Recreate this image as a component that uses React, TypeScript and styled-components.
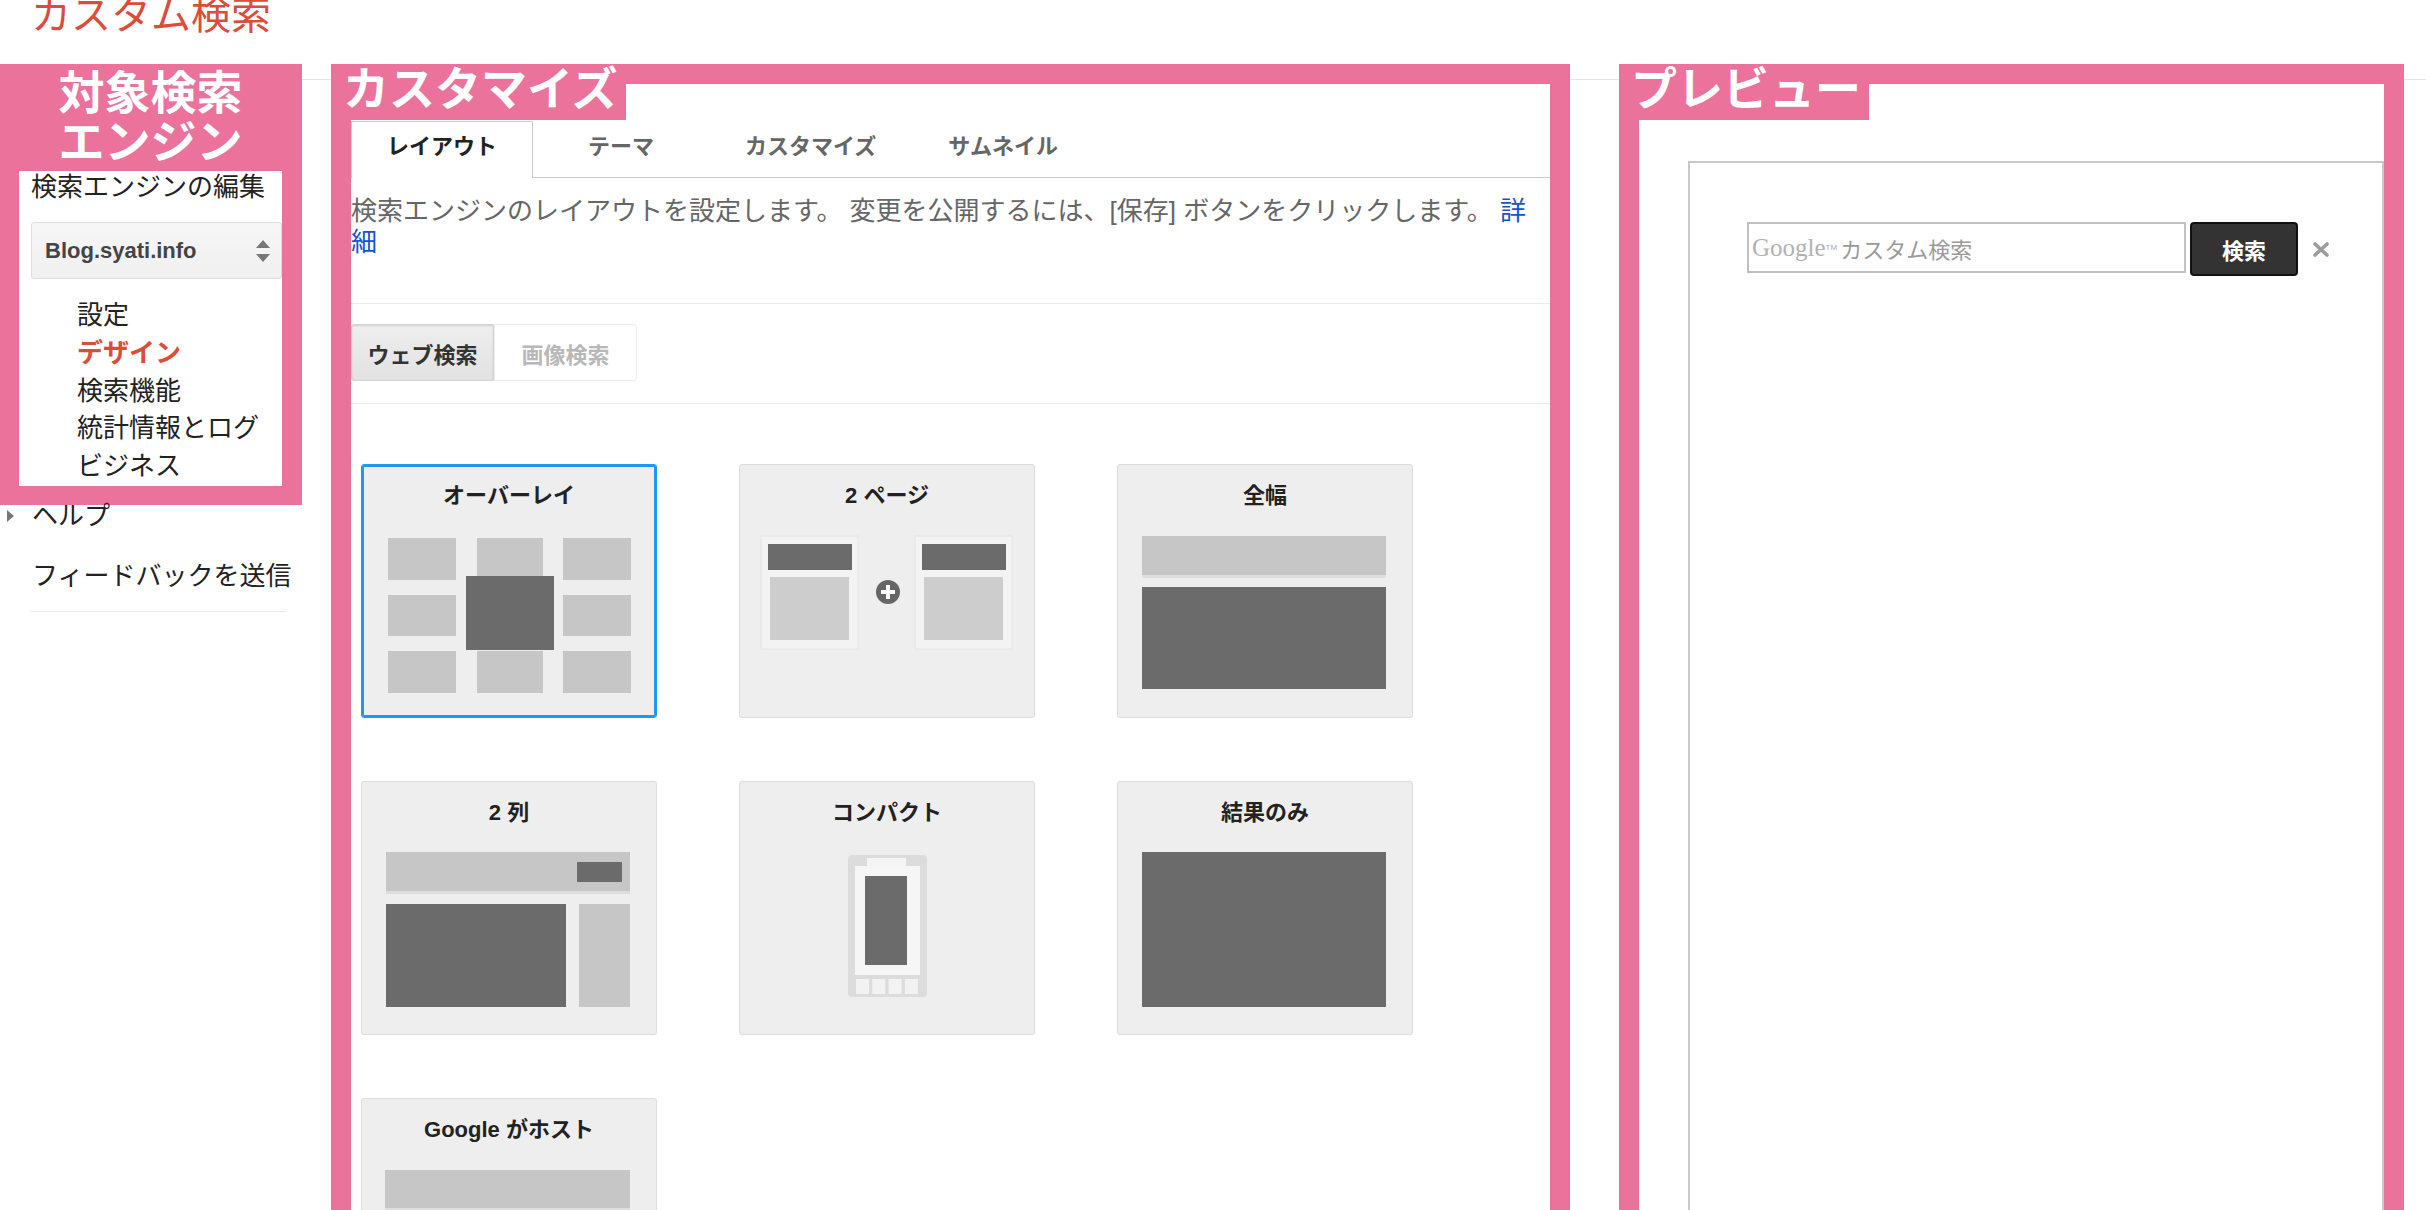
import React from "react";
import styled, { createGlobalStyle } from "styled-components";

const PINK = "#eb739b";
const DARK = "#6b6b6b";
const LIGHT = "#c6c6c6";

const GlobalStyle = createGlobalStyle`
  html, body {
    margin: 0;
    padding: 0;
    background: #fff;
    overflow: hidden;
  }
  body {
    font-family: "Liberation Sans", "Noto Sans CJK JP", sans-serif;
    color: #222;
  }
`;

const Page = styled.div`
  width: 2426px;
  height: 1210px;
  overflow: hidden;
`;

const Header = styled.header`
  display: flow-root;
  height: 79px;
  border-bottom: 1px solid #e5e5e5;
`;

const Title = styled.h1`
  margin: -5px 0 0;
  padding-left: 31px;
  font-size: 40px;
  line-height: 40px;
  font-weight: 400;
  color: #dd4b39;
`;

const Columns = styled.div`
  display: flex;
  align-items: flex-start;
  margin-top: -16px;
`;

const LeftCol = styled.aside`
  width: 302px;
  flex-shrink: 0;
`;

const EngineBox = styled.section`
  background: ${PINK};
  padding: 5px 20px 19px 19px;
`;

const BoxHeading = styled.h2`
  margin: 0 0 4px;
  color: #fff;
  font-size: 46px;
  line-height: 49px;
  font-weight: 700;
  text-align: center;
`;

const EngineCard = styled.div`
  background: #fff;
  height: 315px;
  padding-left: 12px;
  overflow: hidden;
`;

const EditLabel = styled.div`
  font-size: 26px;
  line-height: 32px;
`;

const Select = styled.div`
  margin-top: 19px;
  height: 57px;
  box-sizing: border-box;
  border: 1px solid #dcdcdc;
  border-radius: 3px;
  background: linear-gradient(#f6f6f6, #f0f0f0);
  display: flex;
  align-items: center;
  justify-content: space-between;
  padding: 0 11px 0 13px;
  font-size: 22px;
  font-weight: 700;
  color: #444;
`;

const NavList = styled.ul`
  list-style: none;
  margin: 18px 0 0;
  padding: 0 0 0 46px;
`;

const NavItem = styled.li<{ $active?: boolean }>`
  font-size: 26px;
  line-height: 37.8px;
  color: ${(p) => (p.$active ? "#dd4b39" : "#222")};
  font-weight: ${(p) => (p.$active ? 700 : 400)};
`;

const HelpRow = styled.div`
  display: flex;
  align-items: center;
  margin-top: -5px;
  padding-left: 7px;
  gap: 18px;
  font-size: 26px;
  line-height: 32px;
`;

const Feedback = styled.div`
  margin: 28px 16px 0 30px;
  padding: 0 0 19px 2px;
  border-bottom: 1px solid #ebebeb;
  font-size: 26px;
  line-height: 32px;
  white-space: nowrap;
`;

const Frame = styled.section<{ $width: number; $gap: number }>`
  width: ${(p) => p.$width}px;
  margin-left: ${(p) => p.$gap}px;
  flex-shrink: 0;
  box-sizing: border-box;
  min-height: 1300px;
  border: 20px solid ${PINK};
  background: #fff;
`;

const FrameLabel = styled.div`
  display: inline-block;
  vertical-align: top;
  margin: -20px 0 0 -20px;
  padding: 0 8px 6px 12px;
  height: 56px;
  box-sizing: border-box;
  background: ${PINK};
  color: #fff;
  font-size: 46px;
  line-height: 50px;
  font-weight: 700;
`;

const TabBar = styled.nav`
  display: flex;
  align-items: flex-end;
  height: 56px;
  margin-top: 1px;
  border-bottom: 1px solid #ccc;
`;

const Tab = styled.div<{ $active?: boolean }>`
  min-width: 176px;
  height: ${(p) => (p.$active ? 57 : 56)}px;
  margin-bottom: ${(p) => (p.$active ? -1 : 0)}px;
  box-sizing: border-box;
  padding: 0 35px 4px;
  border: 1px solid ${(p) => (p.$active ? "#ccc" : "transparent")};
  border-bottom: 0;
  background: #fff;
  text-align: center;
  font-size: 22px;
  line-height: 50px;
  font-weight: 700;
  color: ${(p) => (p.$active ? "#222" : "#666")};
`;

const Description = styled.p`
  margin: 0;
  padding: 18px 10px 45px 0;
  border-bottom: 1px solid #ebebeb;
  font-size: 26px;
  line-height: 31px;
  color: #666;

  a {
    color: #15c;
    text-decoration: none;
  }
`;

const SegmentRow = styled.div`
  display: flex;
  padding: 20px 0 22px;
  border-bottom: 1px solid #ebebeb;
`;

const Segment = styled.div<{ $active?: boolean }>`
  width: 143px;
  height: 57px;
  box-sizing: border-box;
  display: flex;
  align-items: center;
  justify-content: center;
  font-size: 22px;
  font-weight: 700;
  border: 1px solid ${(p) => (p.$active ? "#d4d4d4" : "#ececec")};
  border-radius: ${(p) => (p.$active ? "3px 0 0 3px" : "0 3px 3px 0")};
  background: ${(p) => (p.$active ? "linear-gradient(#eeeeee, #e2e2e2)" : "#fff")};
  box-shadow: ${(p) => (p.$active ? "inset 0 1px 2px rgba(0,0,0,0.12)" : "none")};
  color: ${(p) => (p.$active ? "#333" : "#b8b8b8")};
`;

const CardGrid = styled.div`
  display: grid;
  grid-template-columns: repeat(3, 296px);
  column-gap: 82px;
  row-gap: 63px;
  padding: 60px 0 0 10px;
`;

const Card = styled.div<{ $selected?: boolean }>`
  height: 254px;
  box-sizing: border-box;
  border: 1px solid ${(p) => (p.$selected ? "#2196f3" : "#dcdcdc")};
  border-radius: 3px;
  background: #eee;
  box-shadow: ${(p) => (p.$selected ? "inset 0 0 0 2px #2196f3" : "none")};
  overflow: hidden;
`;

const CardTitle = styled.div`
  height: 69px;
  box-sizing: border-box;
  padding-top: 16px;
  text-align: center;
  font-size: 22px;
  line-height: 30px;
  font-weight: 700;
  color: #222;
`;

const Thumb = styled.svg`
  display: block;
  width: 294px;
  height: 160px;
`;

const PreviewBox = styled.div`
  margin: 41px 0 0 49px;
  min-height: 1100px;
  border: 2px solid #c9c9c9;
`;

const SearchRow = styled.div`
  display: flex;
  align-items: flex-start;
  padding: 59px 0 0 57px;
`;

const SearchInput = styled.div`
  width: 439px;
  height: 51px;
  box-sizing: border-box;
  border: 2px solid #c0c0c0;
  display: flex;
  align-items: center;
  padding-left: 3px;
  color: #9a9a9a;
  font-size: 22px;
`;

const Watermark = styled.span`
  font-family: "Liberation Serif", serif;
  font-size: 25px;
  color: #b2b2b2;
`;

const Tm = styled.sup`
  font-size: 8px;
  color: #aaa;
  margin-right: 3px;
  vertical-align: 14px;
`;

const SearchButton = styled.div`
  margin-left: 4px;
  width: 108px;
  height: 54px;
  box-sizing: border-box;
  border: 2px solid #111;
  border-radius: 4px;
  background: #333;
  color: #fff;
  display: flex;
  align-items: center;
  justify-content: center;
  font-size: 22px;
  font-weight: 700;
`;

const ClearIcon = styled.svg`
  margin: 20px 0 0 15px;
`;

type Layout = { title: string; selected?: boolean; art: React.ReactNode };

const box = (x1: number, y1: number, x2: number, y2: number, fill: string, key?: string) => (
  <rect key={key} x={x1} y={y1} width={x2 - x1} height={y2 - y1} fill={fill} />
);

const overlayArt = (
  <>
    {[[27, 95], [116, 182], [202, 270]].map(([a, b]) =>
      [[74, 116], [131, 172], [187, 229]].map(([c, d]) => box(a, c, b, d, LIGHT, `${a}-${c}`))
    )}
    {box(105, 112, 193, 186, DARK)}
  </>
);

const miniPage = (x: number) => (
  <g key={x}>
    <rect x={x} y={72} width={97} height={113} fill="#f3f3f3" stroke="#e4e4e4" />
    {box(x + 7, 80, x + 91, 106, DARK)}
    {box(x + 9, 113, x + 88, 176, "#cdcdcd")}
  </g>
);

const twoPageArt = (
  <>
    {miniPage(22)}
    {miniPage(176)}
    <circle cx={149} cy={128} r={12} fill="#666" />
    <path d="M149 121v14M142 128h14" stroke="#fff" strokeWidth={4} />
  </>
);

const fullWidthArt = (
  <>
    {box(25, 72, 269, 111, LIGHT)}
    {box(25, 111, 269, 114, "#dedede")}
    {box(25, 123, 269, 225, DARK)}
  </>
);

const twoColArt = (
  <>
    {box(25, 71, 269, 110, LIGHT)}
    {box(25, 110, 269, 113, "#dedede")}
    {box(216, 81, 261, 101, DARK)}
    {box(25, 123, 205, 226, DARK)}
    {box(218, 123, 269, 226, LIGHT)}
  </>
);

const compactArt = (
  <>
    <rect x={109} y={74} width={79} height={142} rx={4} fill="#dcdcdc" />
    {box(128, 77, 167, 85, "#f4f4f4")}
    {box(116, 85, 181, 194, "#f6f6f6")}
    {box(126, 95, 168, 184, DARK)}
    {[0, 1, 2, 3].map((i) => box(117 + i * 16.3, 198, 130 + i * 16.3, 213, "#f2f2f2", `b${i}`))}
  </>
);

const resultsArt = <>{box(25, 71, 269, 226, DARK)}</>;

const hostedArt = (
  <>
    {box(24, 72, 269, 110, LIGHT)}
    {box(24, 110, 269, 113, "#dedede")}
    {box(24, 123, 269, 225, DARK)}
  </>
);

const layouts: Layout[] = [
  { title: "オーバーレイ", selected: true, art: overlayArt },
  { title: "2 ページ", art: twoPageArt },
  { title: "全幅", art: fullWidthArt },
  { title: "2 列", art: twoColArt },
  { title: "コンパクト", art: compactArt },
  { title: "結果のみ", art: resultsArt },
  { title: "Google がホスト", art: hostedArt },
];

const navItems = ["設定", "デザイン", "検索機能", "統計情報とログ", "ビジネス"];
const tabs = ["レイアウト", "テーマ", "カスタマイズ", "サムネイル"];

export default function App() {
  return (
    <Page>
      <GlobalStyle />
      <Header>
        <Title>カスタム検索</Title>
      </Header>
      <Columns>
        <LeftCol>
          <EngineBox>
            <BoxHeading>
              対象検索
              <br />
              エンジン
            </BoxHeading>
            <EngineCard>
              <EditLabel>検索エンジンの編集</EditLabel>
              <Select>
                <span>Blog.syati.info</span>
                <svg width="14" height="22" viewBox="0 0 14 22">
                  <path d="M0 8L7 0L14 8Z" fill="#777" />
                  <path d="M0 14L7 22L14 14Z" fill="#777" />
                </svg>
              </Select>
              <NavList>
                {navItems.map((item) => (
                  <NavItem key={item} $active={item === "デザイン"}>
                    {item}
                  </NavItem>
                ))}
              </NavList>
            </EngineCard>
          </EngineBox>
          <HelpRow>
            <svg width="7" height="12" viewBox="0 0 7 12">
              <path d="M0 0L7 6L0 12Z" fill="#777" />
            </svg>
            <span>ヘルプ</span>
          </HelpRow>
          <Feedback>フィードバックを送信</Feedback>
        </LeftCol>

        <Frame $width={1239} $gap={29}>
          <FrameLabel>カスタマイズ</FrameLabel>
          <TabBar>
            {tabs.map((t, i) => (
              <Tab key={t} $active={i === 0}>
                {t}
              </Tab>
            ))}
          </TabBar>
          <Description>
            検索エンジンのレイアウトを設定します。 変更を公開するには、[保存] ボタンをクリックします。{" "}
            <a href="#">詳細</a>
          </Description>
          <SegmentRow>
            <Segment $active>ウェブ検索</Segment>
            <Segment>画像検索</Segment>
          </SegmentRow>
          <CardGrid>
            {layouts.map((l) => (
              <Card key={l.title} $selected={l.selected}>
                <CardTitle>{l.title}</CardTitle>
                <Thumb viewBox="1 70 294 160">{l.art}</Thumb>
              </Card>
            ))}
          </CardGrid>
        </Frame>

        <Frame $width={785} $gap={49}>
          <FrameLabel>プレビュー</FrameLabel>
          <PreviewBox>
            <SearchRow>
              <SearchInput>
                <Watermark>Google</Watermark>
                <Tm>TM</Tm>
                カスタム検索
              </SearchInput>
              <SearchButton>検索</SearchButton>
              <ClearIcon width="16" height="15" viewBox="0 0 16 15">
                <path d="M2 2L14 13M14 2L2 13" stroke="#9c9c9c" strokeWidth="3.6" strokeLinecap="round" />
              </ClearIcon>
            </SearchRow>
          </PreviewBox>
        </Frame>
      </Columns>
    </Page>
  );
}
